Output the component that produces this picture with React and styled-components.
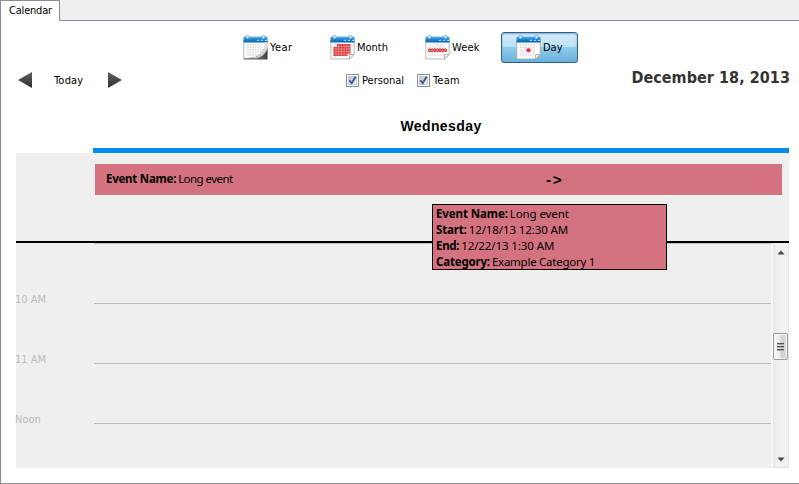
import React from 'react';
import styled, { createGlobalStyle } from 'styled-components';

const Global = createGlobalStyle`
  * { box-sizing: border-box; }
  body { margin: 0; background: #fff; overflow: hidden; }
`;
const Window = styled.div`
  width: 799px; height: 484px; display: flex; flex-direction: column;
  border-left: 1px solid #8c8c99; border-bottom: 1px solid #8c8c99;
  font: 11px/14px "DejaVu Sans Condensed", "DejaVu Sans", sans-serif;
  font-stretch: condensed; color: #000; background: #fff;
`;
const TabStrip = styled.div`
  display: flex; height: 21px; flex: none;
`;
const Tab = styled.div`
  width: 59px; padding: 3px 0 0 8px;
  border-top: 1px solid #8c8c99; border-right: 1px solid #8c8c99;
`;
const TabFill = styled.div`
  flex: 1; background: #efefef; border-bottom: 1px solid #8c8c99;
`;
const Label = styled.span`
  white-space: nowrap; letter-spacing: ${p => p.$ls || 0}px;
`;
const Views = styled.div`
  display: flex; margin: 11px 0 0 235px; height: 32px; flex: none;
`;
const ViewButton = styled.div`
  width: ${p => p.$w}px; height: 31px; margin-right: ${p => p.$gap || 0}px;
  display: flex; align-items: center; gap: 2px; padding: 0 0 0 7px;
  ${p => p.$active && `
    border: 1px solid #2c628b; border-radius: 3px; padding: 0 0 0 14px;
    background: linear-gradient(#d9eefa 0, #b8dff4 48%, #8fcbeb 50%, #69b1dc 100%);
    box-shadow: inset 0 1px 2px #7fa9c3;
  `}
`;
const Tools = styled.div`
  display: grid; grid-template-columns: 329px 71px 1fr auto; align-items: center;
  height: 32px; padding: 0 9px 0 16px; flex: none;
`;
const Nav = styled.div`
  display: flex; align-items: center; margin-top: -1px;
`;
const TodayLabel = styled(Label)` width: 53px; margin-left: 22px; padding-top: 2px; `;
const Check = styled.label`
  display: flex; align-items: center; gap: 3px; padding-top: 1px;
`;
const DateTitle = styled.div`
  font: bold 16px/22px "DejaVu Sans Condensed", "DejaVu Sans", sans-serif;
  font-stretch: condensed; color: #333;
  letter-spacing: 0.05px; white-space: nowrap; margin-top: -4px;
`;
const DayHead = styled.div`
  height: 57px; margin: 0 10px 0 92px; border-bottom: 5px solid #008cf0;
  padding-top: 21px; text-align: center; flex: none;
  font: bold 14px/18px "Liberation Sans", sans-serif; letter-spacing: 0.4px;
`;
const AllDay = styled.div`
  height: 90px; margin: 0 10px 0 15px; padding: 11px 7px 0 79px;
  background: #efefef; border-bottom: 2px solid #000; flex: none;
`;
const EventBar = styled.div`
  height: 31px; background: #d4737f; display: flex; align-items: center;
  padding-left: 11px;
`;
const EventText = styled.div` width: 440px; margin-top: -1px; `;
const Arrow = styled.span`
  font: bold 14px/18px "Liberation Sans", sans-serif; letter-spacing: 1.5px; padding-top: 1px;
  display: inline-block; transform: scaleX(1.1); transform-origin: left;
`;
const Bold = styled.b`
  font: bold 11.5px/16px "Noto Sans", sans-serif; font-stretch: normal;
  letter-spacing: ${p => p.$ls || -0.25}px; margin-right: 2px;
`;
const Value = styled.span`
  font: 11.5px/16px "Noto Sans", sans-serif; font-stretch: normal;
  letter-spacing: ${p => p.$ls || 0}px;
`;
const Hours = styled.div`
  height: 225px; margin: 0 10px 0 15px; background: #efefef; display: flex; flex: none;
`;
const HourList = styled.div` width: 755px; `;
const Hour = styled.div`
  height: 60px; display: grid; grid-template-columns: 78px 1fr; align-items: start;
  color: #bcbcbc; &:last-child { height: 45px; }
`;
const HourLabel = styled(Label)` margin-top: -10px; margin-left: -1px; `;
const HourLine = styled.div` height: 1px; background: #bcbcbc; `;
const Scroll = styled.div`
  width: 18px; flex: none; border: 1px solid #e5e5e5; border-top: 0;
  border-left: 2px solid #f8f8f8; background: linear-gradient(90deg, #e6e6e6, #efefef 20%, #f2f2f2);
  display: flex; flex-direction: column; align-items: center; padding: 7px 0 5px;
`;
const Thumb = styled.div`
  width: 15px; height: 27px; margin: 78px 0 auto; border: 1px solid #989898; border-radius: 2px;
  background: linear-gradient(90deg, #fafafa, #e8e8e8 48%, #d0d0d0 55%, #dedede);
  box-shadow: inset 0 0 0 1px #f7f7f7;
  display: flex; align-items: center; justify-content: center;
`;
const Tooltip = styled.div`
  position: absolute; left: 432px; top: 204px; width: 235px; height: 66px;
  border: 1px solid #000; background: #d4737f; padding: 0 0 0 3px; white-space: nowrap;
`;
const TipRow = styled.div` height: 16px; line-height: 16px; `;

function CalIcon({ kind }) {
  const dots = [];
  for (let r = 0; r < 5; r++)
    for (let c = 0; c < 6; c++)
      dots.push(<rect key={r + '-' + c} x={4 + c * 2.6} y={9 + r * 2.5} width="1.8" height="1.7" />);
  return (
    <svg width="25" height="25" viewBox="0 0 25 25">
      <defs>
        <linearGradient id={'h' + kind} x1="0" y1="0" x2="0" y2="1">
          <stop offset="0" stopColor="#69bff0" /><stop offset=".4" stopColor="#238bd1" /><stop offset="1" stopColor="#0862af" />
        </linearGradient>
        <linearGradient id="fold" x1="0" y1="0" x2="1" y2="0">
          <stop offset="0" stopColor="#8a8a8a" /><stop offset=".5" stopColor="#777" /><stop offset="1" stopColor="#3c3c3c" />
        </linearGradient>
        <linearGradient id="curl" x1="0" y1="0" x2="1" y2="1">
          <stop offset="0" stopColor="#fff" /><stop offset=".6" stopColor="#e2e2e2" /><stop offset="1" stopColor="#999" />
        </linearGradient>
      </defs>
      <path d="M.8 5.5H24.2V19.5L19.5 24H.8Z" fill="#fcfcfc" stroke="#aaa" strokeWidth=".8" />
      <path d="M.5 2.5Q.5 1.5 1.5 1.5H23.5Q24.5 1.5 24.5 2.5V7.5H.5Z" fill={'url(#h' + kind + ')'} />
      <path d="M13.5 6l1.2-1.2h2L15.5 6zM17.5 6l1.2-1.2h2L19.5 6zM21.5 6l1-1.2H24V6z" fill="#a5dcff" />
      <rect x="3" y=".4" width="3" height="3.3" rx="1.4" fill="#e1eff7" stroke="#4a88ae" strokeWidth=".6" />
      <rect x="19" y=".4" width="3" height="3.3" rx="1.4" fill="#e1eff7" stroke="#4a88ae" strokeWidth=".6" />
      <g fill={kind === 'year' ? '#e2e2e2' : '#e5dfea'}>{dots}</g>
      {kind === 'year' && <g>
        <path d="M24.5 12C24 18 20 22.2 .5 23.4V24.6H24.5Z" fill="url(#fold)" />
        <path d="M21 8V15.5C20 19.5 15 22 8 22.5C18 24.2 23.5 20.5 24.3 9.5V7.5H21Z" fill="url(#curl)" />
        <path d="M20.6 14C20.2 16.8 17 20.8 12.5 21.8" stroke="#999" strokeWidth=".7" fill="none" />
      </g>}
      {kind === 'month' && <g>
        <path d="M7 9H20.5V18.5H17.5V21H3.5V12H7Z" fill="#d83234" />
        <path d="M7 11.5H20.5M3.5 14H20.5M3.5 16.5H20.5M3.5 19H17M6 12V21M8.7 9V21M11.4 9V21M14.1 9V21M16.8 9V21M19 9V18" stroke="#f3aaaa" strokeWidth=".6" />
      </g>}
      {kind === 'week' && <g fill="#e58387" stroke="#cf3539" strokeWidth="1">
        {[4.7, 7.3, 9.9, 12.5, 15.1, 17.7, 20.3].map(x => <circle key={x} cx={x} cy="15.2" r="1.4" />)}
      </g>}
      {kind === 'day' && <circle cx="12.5" cy="15.2" r="2" fill="#d63639" stroke="#e88285" strokeWidth=".6" />}
      {kind !== 'year' && <path d="M19.5 24V19.5H24.2Z" fill="#eee" stroke="#aaa" strokeWidth=".8" />}
    </svg>
  );
}

const NavArrow = ({ right }) => (
  <svg width="15" height="16" viewBox="0 0 15 16">
    <defs><linearGradient id="nav" x1="0" y1="0" x2="0" y2="1"><stop stopColor="#606060" /><stop offset="1" stopColor="#303030" /></linearGradient></defs>
    <path d={right ? 'M1 0L15 8L1 16Z' : 'M15 0L1 8L15 16Z'} fill="url(#nav)" />
  </svg>
);
const CheckBox = () => (
  <svg width="13" height="13" viewBox="0 0 13 13">
    <defs><linearGradient id="box" x1="0" y1="0" x2="1" y2="1"><stop stopColor="#b9c0c9" /><stop offset="1" stopColor="#f5f5f5" /></linearGradient></defs>
    <rect x=".5" y=".5" width="12" height="12" fill="#fff" stroke="#8e8f8f" />
    <rect x="2.5" y="2.5" width="8" height="8" fill="url(#box)" stroke="#c5cbd2" />
    <path d="M3.4 6.2L5.7 9.2L9.6 2.7" fill="none" stroke="#3b5398" strokeWidth="1.8" />
  </svg>
);
const Caret = ({ down }) => (
  <svg width="8" height="5" viewBox="0 0 8 5"><path d={down ? 'M.5 .5H7.5L4 4.5Z' : 'M.5 4.5H7.5L4 .5Z'} fill="#444" /></svg>
);

const views = [
  { id: 'year', name: 'Year', w: 60, gap: 27, ls: 0.4 },
  { id: 'month', name: 'Month', w: 68, gap: 27 },
  { id: 'week', name: 'Week', w: 64, gap: 19, ls: 0.15 },
  { id: 'day', name: 'Day', w: 77, active: true },
];
const tips = [
  { k: 'Event Name:', v: 'Long event', kls: -0.1, ls: -0.1 },
  { k: 'Start:', v: '12/18/13 12:30 AM', kls: -0.15, ls: -0.1 },
  { k: 'End:', v: '12/22/13 1:30 AM', kls: -0.3, ls: -0.1 },
  { k: 'Category:', v: 'Example Category 1', kls: -0.18, ls: -0.25 },
];

export default function App() {
  return (
    <>
      <Global />
      <Window>
        <TabStrip><Tab><Label $ls={-0.2}>Calendar</Label></Tab><TabFill /></TabStrip>
        <Views>
          {views.map(v => (
            <ViewButton key={v.id} $w={v.w} $gap={v.gap} $active={v.active}>
              <CalIcon kind={v.id} /><Label $ls={v.ls}>{v.name}</Label>
            </ViewButton>
          ))}
        </Views>
        <Tools>
          <Nav><NavArrow /><TodayLabel $ls={0.2}>Today</TodayLabel><NavArrow right /></Nav>
          <Check><CheckBox /><Label>Personal</Label></Check>
          <Check><CheckBox /><Label $ls={0.2}>Team</Label></Check>
          <DateTitle>December 18, 2013</DateTitle>
        </Tools>
        <DayHead>Wednesday</DayHead>
        <AllDay>
          <EventBar>
            <EventText><Bold>Event Name:</Bold><Value $ls={-0.55}>Long event</Value></EventText>
            <Arrow>-&gt;</Arrow>
          </EventBar>
        </AllDay>
        <Hours>
          <HourList>
            {['', '10 AM', '11 AM', 'Noon'].map(h => (
              <Hour key={h}><HourLabel>{h}</HourLabel><HourLine /></Hour>
            ))}
          </HourList>
          <Scroll>
            <Caret />
            <Thumb><svg width="7" height="8"><path d="M0 .5H7M0 3.5H7M0 6.5H7" stroke="#555" /><path d="M0 1.5H7M0 4.5H7M0 7.5H7" stroke="#aaa" /></svg></Thumb>
            <Caret down />
          </Scroll>
        </Hours>
      </Window>
      <Tooltip>
        {tips.map(t => <TipRow key={t.k}><Bold $ls={t.kls}>{t.k}</Bold><Value $ls={t.ls}>{t.v}</Value></TipRow>)}
      </Tooltip>
    </>
  );
}
